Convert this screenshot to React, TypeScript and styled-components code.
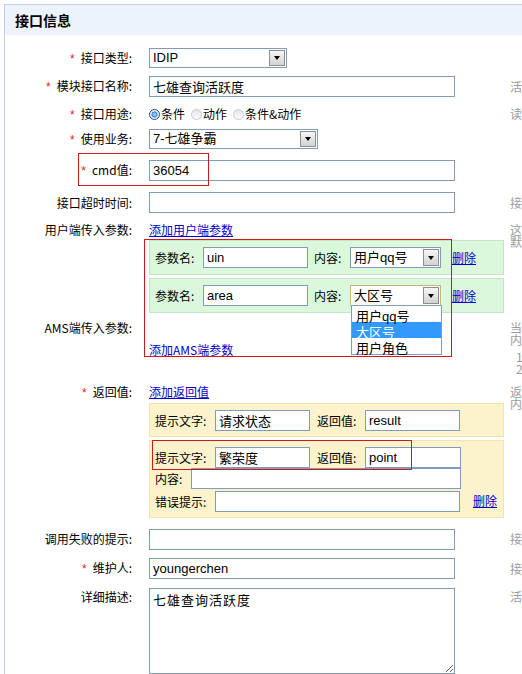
import styled, { createGlobalStyle } from "styled-components";

const GlobalStyle = createGlobalStyle`
  html, body {
    margin: 0;
    padding: 0;
    background: #fff;
    overflow: hidden;
  }
  body {
    font-family: "Noto Sans CJK SC", sans-serif;
    font-size: 12px;
    color: #000;
  }
`;

const Page = styled.div`
  position: relative;
  box-sizing: border-box;
  width: 760px;
  height: 674px;
  padding: 4px 0 0 4px;
  overflow: hidden;
`;

const Panel = styled.section`
  height: 100%;
  border-top: 1px solid #c6cce8;
  border-left: 1px solid #c6cce8;
`;

const Header = styled.h2`
  margin: 0;
  height: 30px;
  padding-left: 10px;
  line-height: 30px;
  background: #edf3fc;
  font-size: 14px;
  font-weight: bold;
`;

const Form = styled.div`
  padding-top: 9px;
`;

interface RowProps {
  $h?: number;
  $top?: boolean;
  $pt?: number;
  $pb?: number;
}

const Row = styled.div<RowProps>`
  display: grid;
  grid-template-columns: 144px 361px 1fr;
  align-items: ${(p) => (p.$top ? "start" : "center")};
  min-height: ${(p) => p.$h ?? 0}px;
  padding: ${(p) => p.$pt ?? 0}px 0 ${(p) => p.$pb ?? 0}px;
`;

const Label = styled.div<{ $pt?: number }>`
  padding: ${(p) => p.$pt ?? 0}px 17px 0 0;
  text-align: right;
  line-height: 18px;
  white-space: nowrap;
`;

const Star = styled.span`
  margin-right: 6px;
  color: #e2231a;
  font-family: "Liberation Sans", sans-serif;
`;

const Field = styled.div<{ $pt?: number; $pb?: number }>`
  display: flex;
  flex-direction: column;
  align-items: flex-start;
  padding: ${(p) => p.$pt ?? 0}px 0 ${(p) => p.$pb ?? 0}px;
`;

const Hint = styled.div<{ $pt?: number }>`
  padding-top: ${(p) => p.$pt ?? 0}px;
  color: #9c9c9c;
  line-height: 12px;
  white-space: nowrap;
`;

const HintList = styled.ol`
  margin: 5px 0 0;
  padding-left: 6px;
  list-style: none;
`;

const TextBox = styled.input<{ $w: number }>`
  box-sizing: border-box;
  width: ${(p) => p.$w}px;
  height: 21px;
  margin: 0;
  padding: 0 3px;
  border: 1px solid #7f9db9;
  background: #fff;
  color: #000;
  font: 13px "Liberation Sans", "Noto Sans CJK SC", sans-serif;
  outline: none;
  flex: none;
`;

const TextArea = styled.textarea`
  box-sizing: border-box;
  width: 306px;
  height: 86px;
  margin: 0;
  padding: 3px 3px;
  border: 1px solid #7f9db9;
  color: #000;
  font: 13px "Noto Sans CJK SC", sans-serif;
  letter-spacing: 1px;
  line-height: 16px;
  outline: none;
`;

const Select = styled.div<{ $w: number; $h?: number; $focus?: boolean }>`
  position: relative;
  box-sizing: border-box;
  width: ${(p) => p.$w}px;
  height: ${(p) => p.$h ?? 20}px;
  display: flex;
  align-items: center;
  justify-content: space-between;
  padding: 1px 1px 1px 3px;
  border: 1px solid ${(p) => (p.$focus ? "#cbb47c" : "#7f9db9")};
  background: #fff;
  font: 13px "Liberation Sans", "Noto Sans CJK SC", sans-serif;
  flex: none;
`;

const SelectText = styled.span`
  line-height: 16px;
  white-space: nowrap;
`;

const SelectButton = styled.span`
  box-sizing: border-box;
  align-self: stretch;
  width: 16px;
  display: flex;
  align-items: center;
  justify-content: center;
  border: 1px solid #8e8e8e;
  background: linear-gradient(#f6f6f6, #d2d2d2);

  &::after {
    content: "";
    border-left: 3px solid transparent;
    border-right: 3px solid transparent;
    border-top: 4px solid #000;
  }
`;

const Menu = styled.ul`
  position: absolute;
  top: 100%;
  left: 0;
  z-index: 2;
  width: 89px;
  margin: 0;
  padding: 0;
  list-style: none;
  border: 1px solid #7f9db9;
  background: #fff;
`;

const MenuItem = styled.li<{ $active?: boolean }>`
  height: 16px;
  padding-left: 4px;
  line-height: 16px;
  font: 13px "Liberation Sans", "Noto Sans CJK SC", sans-serif;
  background: ${(p) => (p.$active ? "#3399ff" : "transparent")};
  color: ${(p) => (p.$active ? "#fff" : "#000")};
`;

const RadioGroup = styled.div`
  display: flex;
  align-items: center;
  gap: 6px;
  line-height: 18px;
`;

const RadioItem = styled.label`
  display: flex;
  align-items: center;
  gap: 1px;
`;

const Radio = styled.span<{ $on?: boolean }>`
  box-sizing: border-box;
  width: 11px;
  height: 11px;
  border-radius: 50%;
  border: 1px solid ${(p) => (p.$on ? "#1e4f86" : "#c4ccd6")};
  background: ${(p) =>
    p.$on
      ? "radial-gradient(circle, #8cc4f4 0 1.5px, #2f73c4 2.5px, #e9eff6 3.5px)"
      : "linear-gradient(#e4e4e4, #fdfdfd)"};
`;

const Link = styled.a`
  color: #0000cc;
  text-decoration: underline;
  line-height: 18px;
  white-space: nowrap;
  cursor: pointer;
`;

const BoxList = styled.div<{ $mt: number }>`
  display: flex;
  flex-direction: column;
  gap: 3px;
  margin-top: ${(p) => p.$mt}px;
`;

const Box = styled.div<{ $tone: "green" | "yellow"; $pb?: number }>`
  box-sizing: border-box;
  width: 355px;
  display: flex;
  align-items: center;
  padding: 6px 5px ${(p) => p.$pb ?? 6}px;
  border: 1px solid ${(p) => (p.$tone === "green" ? "#c3e5c3" : "#f1e4ad")};
  background: ${(p) => (p.$tone === "green" ? "#dcf8dc" : "#fcf3cc")};
`;

const BoxLines = styled.div`
  display: flex;
  flex-direction: column;
`;

const BoxLine = styled.div<{ $mt?: number }>`
  display: flex;
  align-items: center;
  margin-top: ${(p) => p.$mt ?? 0}px;
`;

const InlineLabel = styled.span<{ $w: number; $ml?: number }>`
  flex: none;
  width: ${(p) => p.$w}px;
  margin-left: ${(p) => p.$ml ?? 0}px;
  line-height: 21px;
  white-space: nowrap;
`;

const DeleteLink = styled(Link)<{ $bottom?: boolean }>`
  margin-left: ${(p) => (p.$bottom ? 12 : 11)}px;
  align-self: ${(p) => (p.$bottom ? "flex-end" : "center")};
  margin-bottom: ${(p) => (p.$bottom ? 2 : 0)}px;
`;

/* hand-drawn red annotation boxes laid over the form */
const Highlight = styled.div<{ $x: number; $y: number; $w: number; $h: number }>`
  position: absolute;
  left: ${(p) => p.$x}px;
  top: ${(p) => p.$y}px;
  width: ${(p) => p.$w}px;
  height: ${(p) => p.$h}px;
  box-sizing: border-box;
  border: 1px solid #cc1a1a;
  pointer-events: none;
  z-index: 3;
`;

function SelectField({ w, h, text, focus, children }: { w: number; h?: number; text: string; focus?: boolean; children?: React.ReactNode }) {
  return (
    <Select $w={w} $h={h} $focus={focus}>
      <SelectText>{text}</SelectText>
      <SelectButton />
      {children}
    </Select>
  );
}

export default function App() {
  return (
    <>
      <GlobalStyle />
      <Page>
        <Panel>
          <Header>接口信息</Header>
          <Form>
            <Row $h={28}>
              <Label><Star>*</Star>接口类型:</Label>
              <Field>
                <SelectField w={138} text="IDIP" />
              </Field>
            </Row>

            <Row $h={29}>
              <Label><Star>*</Star>模块接口名称:</Label>
              <Field>
                <TextBox $w={306} value="七雄查询活跃度" readOnly />
              </Field>
              <Hint>活动名称，如七雄查询活跃度</Hint>
            </Row>

            <Row $h={26}>
              <Label><Star>*</Star>接口用途:</Label>
              <Field>
                <RadioGroup>
                  <RadioItem><Radio $on />条件</RadioItem>
                  <RadioItem><Radio />动作</RadioItem>
                  <RadioItem><Radio />条件&amp;动作</RadioItem>
                </RadioGroup>
              </Field>
              <Hint>读接口选条件，写接口选动作</Hint>
            </Row>

            <Row $h={24}>
              <Label><Star>*</Star>使用业务:</Label>
              <Field>
                <SelectField w={169} text="7-七雄争霸" />
              </Field>
            </Row>

            <Row $h={38}>
              <Label><Star>*</Star>cmd值:</Label>
              <Field>
                <TextBox $w={306} value="36054" readOnly />
              </Field>
            </Row>

            <Row $h={27}>
              <Label>接口超时时间:</Label>
              <Field>
                <TextBox $w={306} value="" readOnly />
              </Field>
              <Hint>接口超时时间，单位毫秒</Hint>
            </Row>

            <Row $top $pt={5}>
              <Label>用户端传入参数:</Label>
              <Field>
                <Link>添加用户端参数</Link>
                <BoxList $mt={1}>
                  <Box $tone="green">
                    <InlineLabel $w={48}>参数名:</InlineLabel>
                    <TextBox $w={105} value="uin" readOnly />
                    <InlineLabel $w={36} $ml={6}>内容:</InlineLabel>
                    <SelectField w={91} h={21} text="用户qq号" />
                    <DeleteLink>删除</DeleteLink>
                  </Box>
                  <Box $tone="green">
                    <InlineLabel $w={48}>参数名:</InlineLabel>
                    <TextBox $w={105} value="area" readOnly />
                    <InlineLabel $w={36} $ml={6}>内容:</InlineLabel>
                    <SelectField w={91} h={21} text="大区号" focus>
                      <Menu>
                        <MenuItem>用户qq号</MenuItem>
                        <MenuItem $active>大区号</MenuItem>
                        <MenuItem>用户角色</MenuItem>
                      </Menu>
                    </SelectField>
                    <DeleteLink>删除</DeleteLink>
                  </Box>
                </BoxList>
              </Field>
              <Hint $pt={3}>
                这里添加的参数由用户端传入，
                <br />
                默认已有uin、area等参数
              </Hint>
            </Row>

            <Row $top>
              <Label $pt={6}>AMS端传入参数:</Label>
              <Field $pt={28} $pb={16}>
                <Link>添加AMS端参数</Link>
              </Field>
              <Hint $pt={9}>
                当参数需要由AMS端传入时添加，
                <br />
                内容可以为：
                <HintList>
                  <li>1、活动号</li>
                  <li>2、功能号</li>
                </HintList>
              </Hint>
            </Row>

            <Row $top $pt={8} $pb={6}>
              <Label><Star>*</Star>返回值:</Label>
              <Field>
                <Link>添加返回值</Link>
                <BoxList $mt={2}>
                  <Box $tone="yellow" $pb={5}>
                    <InlineLabel $w={60}>提示文字:</InlineLabel>
                    <TextBox $w={95} value="请求状态" readOnly />
                    <InlineLabel $w={48} $ml={7}>返回值:</InlineLabel>
                    <TextBox $w={95} value="result" readOnly />
                  </Box>
                  <Box $tone="yellow" $pb={5}>
                    <BoxLines>
                      <BoxLine>
                        <InlineLabel $w={60}>提示文字:</InlineLabel>
                        <TextBox $w={95} value="繁荣度" readOnly />
                        <InlineLabel $w={48} $ml={7}>返回值:</InlineLabel>
                        <TextBox $w={96} value="point" readOnly />
                      </BoxLine>
                      <BoxLine>
                        <InlineLabel $w={36}>内容:</InlineLabel>
                        <TextBox $w={270} value="" readOnly />
                      </BoxLine>
                      <BoxLine $mt={2}>
                        <InlineLabel $w={60}>错误提示:</InlineLabel>
                        <TextBox $w={245} value="" readOnly />
                      </BoxLine>
                    </BoxLines>
                    <DeleteLink $bottom>删除</DeleteLink>
                  </Box>
                </BoxList>
              </Field>
              <Hint $pt={3}>
                返回值与接口的返回一一对应，
                <br />
                内容为空时直接显示返回值
              </Hint>
            </Row>

            <Row $h={30}>
              <Label>调用失败的提示:</Label>
              <Field>
                <TextBox $w={306} value="" readOnly />
              </Field>
              <Hint>接口调用失败时提示给用户</Hint>
            </Row>

            <Row $h={29}>
              <Label><Star>*</Star>维护人:</Label>
              <Field>
                <TextBox $w={306} value="youngerchen" readOnly />
              </Field>
              <Hint>接口维护人的RTX</Hint>
            </Row>

            <Row $top $pt={5}>
              <Label>详细描述:</Label>
              <Field>
                <TextArea value="七雄查询活跃度" readOnly />
              </Field>
              <Hint $pt={3}>活动的详细描述</Hint>
            </Row>
          </Form>
        </Panel>

        <Highlight $x={78} $y={153} $w={131} $h={33} />
        <Highlight $x={144} $y={239} $w={308} $h={118} />
        <Highlight $x={152} $y={440} $w={260} $h={30} />
      </Page>
    </>
  );
}
